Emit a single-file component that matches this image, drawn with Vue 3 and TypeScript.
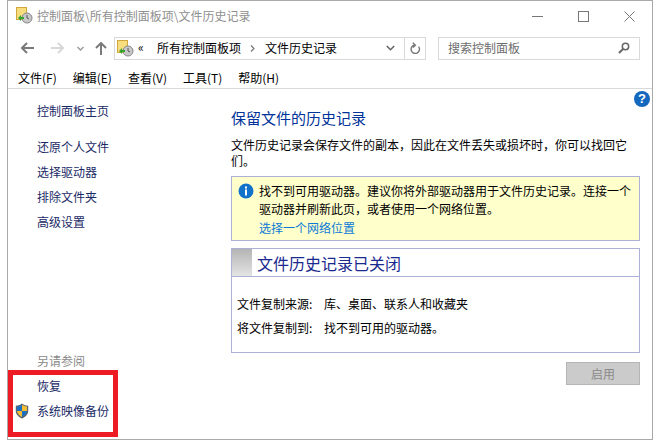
<script setup lang="ts">
const menus: string[] = ['文件(F)', '编辑(E)', '查看(V)', '工具(T)', '帮助(H)']
const tasks: string[] = ['还原个人文件', '选择驱动器', '排除文件夹', '高级设置']
</script>

<template>
  <div class="page">
    <div class="window">
      <header class="titlebar">
        <svg class="app-icon" width="17" height="17" viewBox="0 0 17 17">
          <rect x="0.5" y="0.5" width="10" height="12" fill="#f7dd7e" stroke="#d2a83c" />
          <circle cx="11" cy="11" r="5" fill="#c9c9c9" stroke="#858585" />
          <path d="M11 8v3l2 1" fill="none" stroke="#555" />
          <path d="M2 11l3-3v2h3v2H5v2z" fill="#35a52e" />
        </svg>
        <span class="title">控制面板\所有控制面板项\文件历史记录</span>
        <div class="controls">
          <svg width="11" height="11" viewBox="0 0 11 11"><path d="M0 5.5h11" stroke="#777" /></svg>
          <svg width="11" height="11" viewBox="0 0 11 11"><rect x="0.5" y="0.5" width="10" height="10" fill="none" stroke="#777" /></svg>
          <svg width="11" height="11" viewBox="0 0 11 11"><path d="M.5.5l10 10M10.5.5l-10 10" stroke="#777" /></svg>
        </div>
      </header>

      <div class="toolbar">
        <svg class="nav back" width="13" height="12" viewBox="0 0 13 12"><path d="M6 1L1 6l5 5M1 6h12" fill="none" stroke="#7a7a7a" stroke-width="2" /></svg>
        <svg class="nav forward" width="13" height="12" viewBox="0 0 13 12"><path d="M7 1l5 5-5 5M12 6H0" fill="none" stroke="#d8d8d8" stroke-width="2" /></svg>
        <svg class="nav caret" width="7" height="5" viewBox="0 0 7 5"><path d="M.5 1l3 3 3-3" fill="none" stroke="#999" stroke-width="1.4" /></svg>
        <svg class="nav up" width="12" height="13" viewBox="0 0 12 13"><path d="M1 6l5-5 5 5M6 1v12" fill="none" stroke="#7a7a7a" stroke-width="2" /></svg>
        <div class="address">
          <svg class="addr-icon" width="17" height="17" viewBox="0 0 17 17">
            <rect x="0.5" y="0.5" width="10" height="12" fill="#f7dd7e" stroke="#d2a83c" />
            <circle cx="11" cy="11" r="5" fill="#c9c9c9" stroke="#858585" />
            <path d="M11 8v3l2 1" fill="none" stroke="#555" />
            <path d="M2 11l3-3v2h3v2H5v2z" fill="#35a52e" />
          </svg>
          <span class="crumb-more">«</span>
          <span class="crumb first">所有控制面板项</span>
          <svg class="crumb-sep" width="5" height="7" viewBox="0 0 5 7"><path d="M1 .5l3 3-3 3" fill="none" stroke="#777" stroke-width="1.2" /></svg>
          <span class="crumb">文件历史记录</span>
          <svg class="addr-caret" width="9" height="6" viewBox="0 0 9 6"><path d="M.8 1l3.700 3.700L8.200 1" fill="none" stroke="#666" stroke-width="1.6" /></svg>
          <div class="refresh">
            <svg width="11" height="13" viewBox="0 0 11 13"><path d="M8.600 4.600A4.200 4.200 0 1 1 4 3.200M2.800 .8L5.400 3.200 3 5.600" fill="none" stroke="#777" stroke-width="1.4" /></svg>
          </div>
        </div>
        <div class="search">
          <span class="search-text">搜索控制面板</span>
          <svg width="12" height="12" viewBox="0 0 12 12"><circle cx="7.500" cy="4.500" r="3.200" fill="none" stroke="#666" stroke-width="1.5" /><path d="M5 7l-4 4" stroke="#666" stroke-width="2" /></svg>
        </div>
      </div>

      <nav class="menubar">
        <span v-for="m in menus" :key="m" class="menu-item">{{ m }}</span>
      </nav>

      <div class="body">
        <aside class="sidebar">
          <a class="side-link home">控制面板主页</a>
          <div class="tasks">
            <a v-for="t in tasks" :key="t" class="side-link task">{{ t }}</a>
          </div>
          <div class="see-also">
            <div class="see-title">另请参阅</div>
            <a class="side-link task">恢复</a>
            <div class="shield-row">
              <svg class="shield" width="14" height="16" viewBox="0 0 14 16">
                <path d="M7 .5C5 2 3 2.600 .8 2.800V8c0 3.500 3 6 6.200 7.500C10.200 14 13.200 11.500 13.200 8V2.800C11 2.600 9 2 7 .5z" fill="#5a6470" />
                <path d="M7 1.800C5.400 2.900 3.700 3.400 2 3.600V8h5z" fill="#1b71c4" />
                <path d="M7 1.800V8h5V3.600C10.300 3.400 8.600 2.900 7 1.800z" fill="#f5bd2f" />
                <path d="M2 8c.2 2.700 2.500 4.700 5 6V8z" fill="#f5bd2f" />
                <path d="M7 8v6c2.500-1.300 4.800-3.300 5-6z" fill="#1b71c4" />
              </svg>
              <a class="side-link">系统映像备份</a>
            </div>
          </div>
        </aside>

        <main class="content">
          <h1 class="heading">保留文件的历史记录</h1>
          <p class="desc">文件历史记录会保存文件的副本，因此在文件丢失或损坏时，你可以找回它们。</p>

          <section class="notice">
            <svg class="info" width="16" height="16" viewBox="0 0 16 16">
              <circle cx="8" cy="8" r="7.500" fill="#1272c9" />
              <rect x="7" y="6.500" width="2" height="6" fill="#fff" />
              <rect x="7" y="3.500" width="2" height="2" fill="#fff" />
            </svg>
            <div class="notice-text">
              <p>找不到可用驱动器。建议你将外部驱动器用于文件历史记录。连接一个驱动器并刷新此页，或者使用一个网络位置。</p>
              <a class="net-link">选择一个网络位置</a>
            </div>
          </section>

          <section class="panel">
            <div class="panel-head">
              <div class="panel-swatch"></div>
              <h2 class="panel-title">文件历史记录已关闭</h2>
            </div>
            <div class="panel-body">
              <div class="kv"><span class="k">文件复制来源:</span><span>库、桌面、联系人和收藏夹</span></div>
              <div class="kv"><span class="k">将文件复制到:</span><span>找不到可用的驱动器。</span></div>
            </div>
          </section>

          <div class="actions">
            <button class="enable" disabled>启用</button>
          </div>
        </main>

        <div class="help">?</div>
      </div>

      <div class="highlight"></div>
    </div>
  </div>
</template>

<style>
html, body { margin: 0; background: #fff; }
</style>

<style scoped>
.page {
  width: 660px;
  height: 447px;
  overflow: hidden;
  background: #fff;
  font-family: "Noto Sans CJK SC", "Liberation Sans", sans-serif;
  font-size: 12px;
  color: #000;
}
.window {
  position: relative;
  box-sizing: border-box;
  width: 646px;
  height: 440px;
  margin-left: 7px;
  border: 1px solid #a9a9a9;
  display: flex;
  flex-direction: column;
}
.titlebar {
  height: 29px;
  display: flex;
  align-items: center;
  flex: none;
  padding-left: 8px;
}
.app-icon { margin-right: 4px; }
.title { color: #8f8f8f; line-height: 16px; }
.controls {
  margin-left: auto;
  display: flex;
  gap: 35px;
  padding-right: 17px;
  align-items: center;
  margin-top: 1px;
}
.toolbar {
  height: 24px;
  margin-top: 6px;
  display: flex;
  align-items: center;
  flex: none;
  position: relative;
}
.nav { flex: none; }
.back { margin-left: 13px; }
.forward { margin-left: 17px; }
.caret { margin-left: 13px; }
.up { margin-left: 11px; }
.address {
  box-sizing: border-box;
  width: 312px;
  height: 23px;
  margin-left: 7px;
  border: 1px solid #d9d9d9;
  display: flex;
  align-items: center;
}
.addr-icon { margin-left: 2px; flex: none; }
.crumb-more { margin-left: 4px; width: 12px; line-height: 16px; margin-top: -3px; }
.crumb { margin-left: 5px; line-height: 16px; white-space: nowrap; }
.crumb.first { margin-left: 7px; }
.crumb-sep { margin-left: 9px; margin-right: 5px; flex: none; }
.addr-caret { margin-left: auto; margin-right: 9px; flex: none; }
.refresh {
  width: 20px;
  height: 21px;
  border-left: 1px solid #d9d9d9;
  display: flex;
  align-items: center;
  justify-content: center;
}
.search {
  box-sizing: border-box;
  width: 202px;
  height: 23px;
  margin-left: 12px;
  border: 1px solid #d9d9d9;
  display: flex;
  align-items: center;
  justify-content: space-between;
  padding: 0 9px;
}
.search-text { color: #6d6d6d; line-height: 16px; }
.menubar {
  box-sizing: border-box;
  height: 29px;
  padding: 8px 0 0 10px;
  display: flex;
  gap: 16px;
  border-bottom: 1px solid #d9d9d9;
  flex: none;
  line-height: 20px;
}
.menu-item { white-space: nowrap; }
.body {
  flex: 1;
  display: flex;
  position: relative;
  min-height: 0;
}
.sidebar {
  box-sizing: border-box;
  width: 223px;
  flex: none;
  padding: 14px 0 0 29px;
  display: flex;
  flex-direction: column;
}
.side-link {
  display: block;
  color: #1a2a66;
  line-height: 16px;
  white-space: nowrap;
}
.tasks { margin-top: 20px; display: flex; flex-direction: column; gap: 9px; }
.see-also { margin-top: auto; padding-bottom: 20px; display: flex; flex-direction: column; }
.see-title { color: #8a8a8a; line-height: 16px; margin-bottom: 9px; }
.shield-row { position: relative; margin-top: 9px; }
.shield { position: absolute; left: -22px; top: 0; }
.content {
  box-sizing: border-box;
  width: 409px;
  flex: none;
  padding-top: 19px;
}
.heading {
  margin: 0;
  font-size: 15px;
  font-weight: 400;
  color: #003399;
  line-height: 20px;
}
.desc { margin: 9px 0 0; line-height: 16px; }
.notice {
  box-sizing: border-box;
  height: 65px;
  margin-top: 7px;
  background: #ffffcc;
  border: 1px solid #aeb0d8;
  display: flex;
  padding: 5px 6px 0;
}
.info { flex: none; margin-top: 1px; margin-right: 5px; }
.notice-text p { margin: 0; line-height: 18px; }
.net-link { display: block; color: #0a7ad6; line-height: 16px; margin-top: 2px; }
.panel {
  box-sizing: border-box;
  height: 105px;
  margin-top: 7px;
  border: 1px solid #aeb0d8;
}
.panel-head {
  height: 27px;
  display: flex;
  border-bottom: 1px solid #aeb0d8;
}
.panel-swatch {
  width: 20px;
  background: linear-gradient(#b4b4b4, #e4e4e4);
}
.panel-title {
  margin: 0 0 0 5px;
  font-size: 16px;
  font-weight: 400;
  color: #1a2a8e;
  line-height: 28px;
}
.panel-body { padding: 19px 0 0 5px; display: flex; flex-direction: column; gap: 8px; }
.kv { display: flex; line-height: 16px; }
.k { width: 87px; flex: none; }
.actions { display: flex; justify-content: flex-end; margin-top: 9px; }
.enable {
  box-sizing: border-box;
  width: 74px;
  height: 23px;
  background: #cbcbcb;
  border: 1px solid #b5b5b5;
  color: #8a8a8a;
  font: inherit;
  line-height: 16px;
  padding: 0;
}
.help {
  position: absolute;
  top: 2px;
  right: 2px;
  width: 16px;
  height: 16px;
  border-radius: 50%;
  background: #1468bd;
  color: #fff;
  font: 700 13px/16px "Liberation Sans", sans-serif;
  text-align: center;
}
.highlight {
  position: absolute;
  left: 0;
  top: 369px;
  box-sizing: border-box;
  width: 110px;
  height: 67px;
  border: 5px solid #ed1c24;
}
</style>
